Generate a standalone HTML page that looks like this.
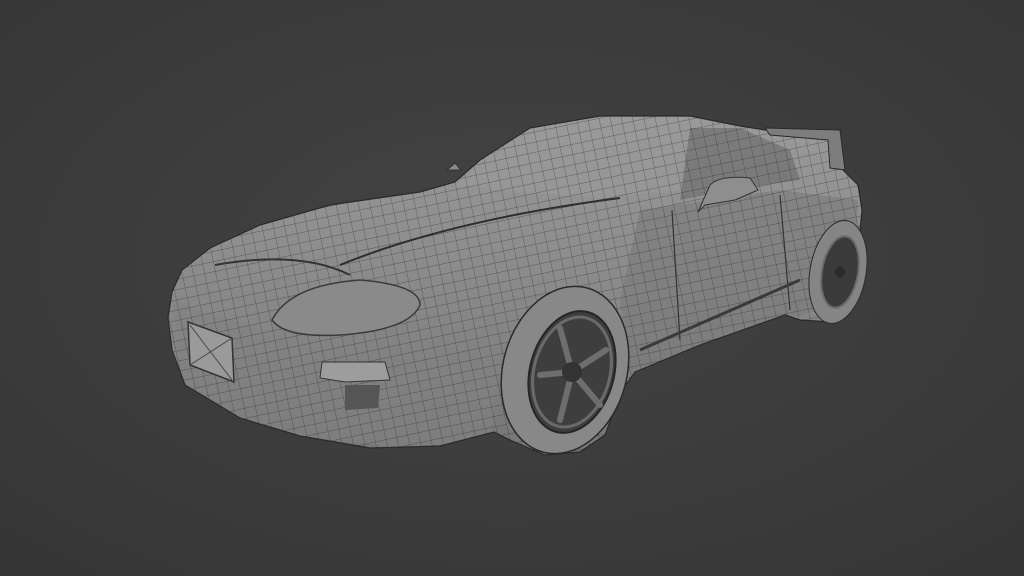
<!DOCTYPE html>
<html><head><style>
html,body{margin:0;padding:0;width:1024px;height:576px;overflow:hidden;background:#3d3d3d}
svg{display:block}
</style></head><body>
<svg width="1024" height="576" viewBox="0 0 1024 576" xmlns="http://www.w3.org/2000/svg">
<defs>
<radialGradient id="bg" cx="50%" cy="45%" r="70%">
<stop offset="0" stop-color="#444444"/><stop offset="1" stop-color="#363636"/>
</radialGradient>
<linearGradient id="body" x1="0" y1="0" x2="0" y2="1">
<stop offset="0" stop-color="#9a9a9a"/><stop offset="0.5" stop-color="#8a8a8a"/><stop offset="1" stop-color="#767676"/>
</linearGradient>
<pattern id="grid" width="11" height="10" patternUnits="userSpaceOnUse" patternTransform="rotate(-12)">
<path d="M0 0H11M0 0V10" stroke="#2a2a2a" stroke-width="0.7" fill="none" opacity="0.7"/>
</pattern>
<clipPath id="cb"><path id="bodyp" d="M172 292 L182 270 L210 248 L260 225 L330 205 L420 192 L455 182 L480 160 L530 128 L600 116 L690 116 L740 126 L765 130 L840 132 L843 170 L858 185 L862 210 L858 250 L850 300 L830 322 L800 320 L785 315 L700 345 L635 372 L622 390 L605 435 L580 452 L545 455 L510 440 L494 432 L440 446 L370 448 L300 436 L240 418 L185 385 L172 350 L168 318 Z"/></clipPath>
</defs>
<rect width="1024" height="576" fill="url(#bg)"/>
<use href="#bodyp" fill="url(#body)"/>
<g clip-path="url(#cb)">
<path d="M640 210 L780 190 L858 200 L855 300 L790 318 L700 345 L630 372 L620 300 Z" fill="#7a7a7a" opacity="0.6"/>
<path d="M455 185 L490 158 L540 130 L610 122 L690 128 L680 190 L600 198 L520 192 Z" fill="#9a9a9a" opacity="0.6"/>
<path d="M690 128 L740 128 L790 150 L800 180 L730 190 L680 200 Z" fill="#6f6f6f" opacity="0.7"/>
<path d="M172 300 L260 330 L320 360 L400 370 L500 350 L490 440 L400 448 L300 436 L240 418 L185 385 Z" fill="#828282" opacity="0.6"/>
<rect width="1024" height="576" fill="url(#grid)"/>
<path d="M215 265 Q300 250 350 275" stroke="#333" stroke-width="2" fill="none"/>
<path d="M340 265 Q450 220 620 198" stroke="#2e2e2e" stroke-width="2" fill="none"/>
<path d="M272 320 Q290 285 360 280 Q420 285 420 305 Q410 330 340 335 Q285 338 272 320Z" fill="#8a8a8a" stroke="#3a3a3a" stroke-width="1.5"/>
<path d="M188 322 L232 338 L234 382 L190 365 Z" fill="#9a9a9a" stroke="#333" stroke-width="1.5"/>
<path d="M190 325 L232 380 M232 338 L190 365" stroke="#444" stroke-width="1"/>
<path d="M322 362 L385 362 L390 380 L345 382 L320 378 Z" fill="#9d9d9d" stroke="#333"/>
<path d="M345 385 L380 385 L378 408 L345 410 Z" fill="#555"/>
<path d="M672 210 L680 340 M780 195 L790 310" stroke="#333" stroke-width="1.2" fill="none"/>
<path d="M640 350 L800 280" stroke="#3a3a3a" stroke-width="3" fill="none"/>
</g>
<use href="#bodyp" fill="none" stroke="#2a2a2a" stroke-width="1.2"/>
<path d="M710 185 Q720 175 750 178 L758 190 L735 200 L705 205 L698 212 Z" fill="#8e8e8e" stroke="#333"/>
<path d="M765 128 L840 130 L845 170 L830 168 L828 140 L770 135Z" fill="#7d7d7d" stroke="#2a2a2a"/>
<g>
<ellipse cx="565" cy="370" rx="62" ry="85" transform="rotate(15 565 370)" fill="#888" stroke="#2a2a2a" stroke-width="1.5"/>
<ellipse cx="572" cy="372" rx="42" ry="62" transform="rotate(15 572 372)" fill="#3e3e3e" stroke="#252525" stroke-width="2"/>
<ellipse cx="572" cy="372" rx="38" ry="56" transform="rotate(15 572 372)" fill="none" stroke="#6a6a6a" stroke-width="3"/>
<g stroke="#6e6e6e" stroke-width="6" stroke-linecap="round">
<path d="M572 372 L560 328 M572 372 L606 350 M572 372 L600 405 M572 372 L560 420 M572 372 L540 375"/>
</g>
<circle cx="572" cy="372" r="10" fill="#333"/>
</g>
<g>
<ellipse cx="838" cy="272" rx="28" ry="52" transform="rotate(10 838 272)" fill="#858585" stroke="#2a2a2a"/>
<ellipse cx="840" cy="272" rx="18" ry="36" transform="rotate(10 840 272)" fill="#3a3a3a" stroke="#6a6a6a" stroke-width="2"/>
<circle cx="840" cy="272" r="5" fill="#2a2a2a"/>
</g>
<path d="M447 170 L455 163 L461 170 Z" fill="#888" stroke="#333"/>
</svg>
</body></html>
